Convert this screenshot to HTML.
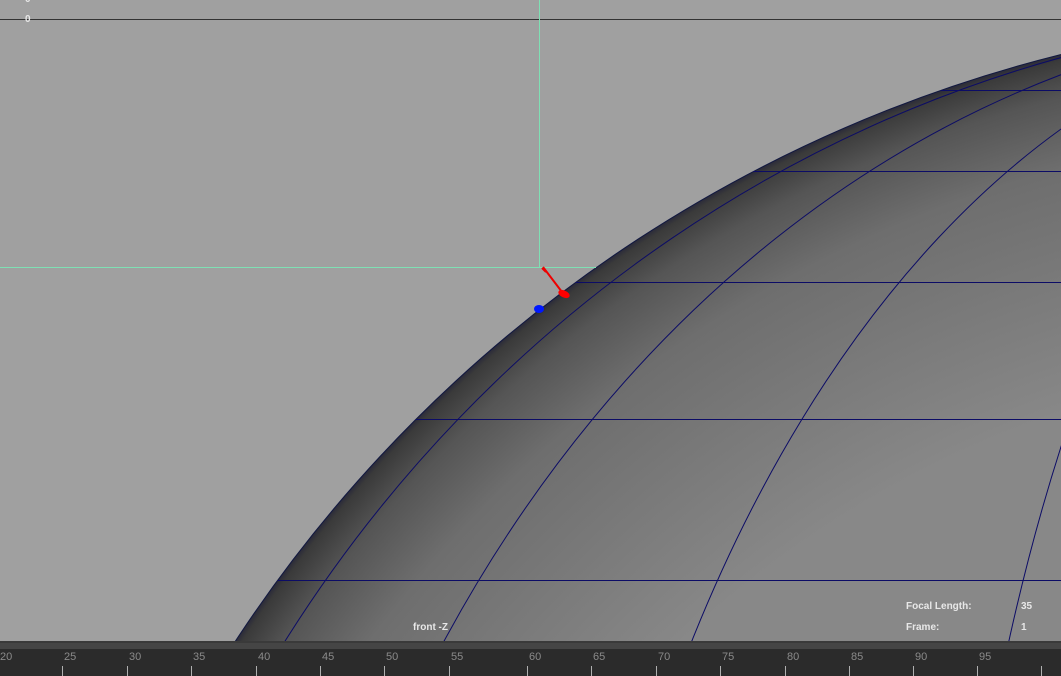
<!DOCTYPE html>
<html><head><meta charset="utf-8"><style>
html,body{margin:0;padding:0;width:1061px;height:676px;overflow:hidden;background:#a0a0a0;font-family:"Liberation Sans",sans-serif}
#w{position:relative;width:1061px;height:676px;overflow:hidden}
.t{position:absolute;color:#e8e8e8;font-size:10px;font-weight:bold;line-height:12px}
.tl{position:absolute;color:#8a8a8a;font-size:11px;top:651px;line-height:13px}
.tk{position:absolute;width:1px;height:10px;top:666px;background:#b0b0b0}
</style></head><body><div id="w">
<svg width="1061" height="676" style="position:absolute;left:0;top:0">
<defs>
<radialGradient id="g" cx="1398" cy="1403" r="1390" gradientUnits="userSpaceOnUse">
<stop offset="0.75" stop-color="#888"/>
<stop offset="0.92" stop-color="#6e6e6e"/>
<stop offset="0.97" stop-color="#555"/>
<stop offset="0.996" stop-color="#3a3a3a"/>
<stop offset="1" stop-color="#2a2a3a"/>
</radialGradient>
<clipPath id="c"><circle cx="1398" cy="1403" r="1390"/></clipPath>
</defs>
<line x1="0" y1="19.5" x2="1061" y2="19.5" stroke="#333" stroke-width="1"/>
<circle cx="1398" cy="1403" r="1390" fill="url(#g)" stroke="#111840" stroke-width="1"/>
<g clip-path="url(#c)" stroke="#0c0c66" stroke-width="1" fill="none">
<line x1="0" y1="90.5" x2="1061" y2="90.5"/>
<line x1="0" y1="171.5" x2="1061" y2="171.5"/>
<line x1="0" y1="282.5" x2="1061" y2="282.5"/>
<line x1="0" y1="419.5" x2="1061" y2="419.5"/>
<line x1="0" y1="580.5" x2="1061" y2="580.5"/>
<ellipse cx="1404" cy="1403" rx="1337" ry="1392"/>
<ellipse cx="1404" cy="1403" rx="1147" ry="1392"/>
<ellipse cx="1404" cy="1403" rx="851" ry="1392"/>
<ellipse cx="1404" cy="1403" rx="472" ry="1392"/>
</g>
<line x1="539.5" y1="0" x2="539.5" y2="267" stroke="#7fe0b4"/>
<line x1="0" y1="267.5" x2="596" y2="267.5" stroke="#7fe0b4"/>
<path d="M542 268 L546 272 M543 267 L562 292" stroke="#e00" stroke-width="2" fill="none"/>
<ellipse cx="564" cy="294" rx="6" ry="3.5" fill="#f00" transform="rotate(25 564 294)"/>
<ellipse cx="539" cy="309" rx="5" ry="4" fill="#0018ff"/>
<rect x="0" y="641" width="1061" height="8" fill="#454545"/>
<rect x="0" y="641" width="1061" height="2" fill="#3a3a3a"/>
<rect x="0" y="649" width="1061" height="27" fill="#2b2b2b"/>
</svg>
<div class="t" style="left:25px;top:-6px">0</div>
<div class="t" style="left:25px;top:14px">0</div>
<div class="t" style="left:413px;top:622px">front -Z</div>
<div class="t" style="left:906px;top:601px">Focal Length:</div>
<div class="t" style="left:1021px;top:601px">35</div>
<div class="t" style="left:906px;top:622px">Frame:</div>
<div class="t" style="left:1021px;top:622px">1</div>
<div class="tl" style="left:0px">20</div>
<div class="tl" style="left:64px">25</div><div class="tk" style="left:62px"></div>
<div class="tl" style="left:129px">30</div><div class="tk" style="left:127px"></div>
<div class="tl" style="left:193px">35</div><div class="tk" style="left:191px"></div>
<div class="tl" style="left:258px">40</div><div class="tk" style="left:256px"></div>
<div class="tl" style="left:322px">45</div><div class="tk" style="left:320px"></div>
<div class="tl" style="left:386px">50</div><div class="tk" style="left:384px"></div>
<div class="tl" style="left:451px">55</div><div class="tk" style="left:449px"></div>
<div class="tl" style="left:529px">60</div><div class="tk" style="left:527px"></div>
<div class="tl" style="left:593px">65</div><div class="tk" style="left:591px"></div>
<div class="tl" style="left:658px">70</div><div class="tk" style="left:656px"></div>
<div class="tl" style="left:722px">75</div><div class="tk" style="left:720px"></div>
<div class="tl" style="left:787px">80</div><div class="tk" style="left:785px"></div>
<div class="tl" style="left:851px">85</div><div class="tk" style="left:849px"></div>
<div class="tl" style="left:915px">90</div><div class="tk" style="left:913px"></div>
<div class="tl" style="left:979px">95</div><div class="tk" style="left:977px"></div>
<div class="tk" style="left:1041px"></div>
</div></body></html>
